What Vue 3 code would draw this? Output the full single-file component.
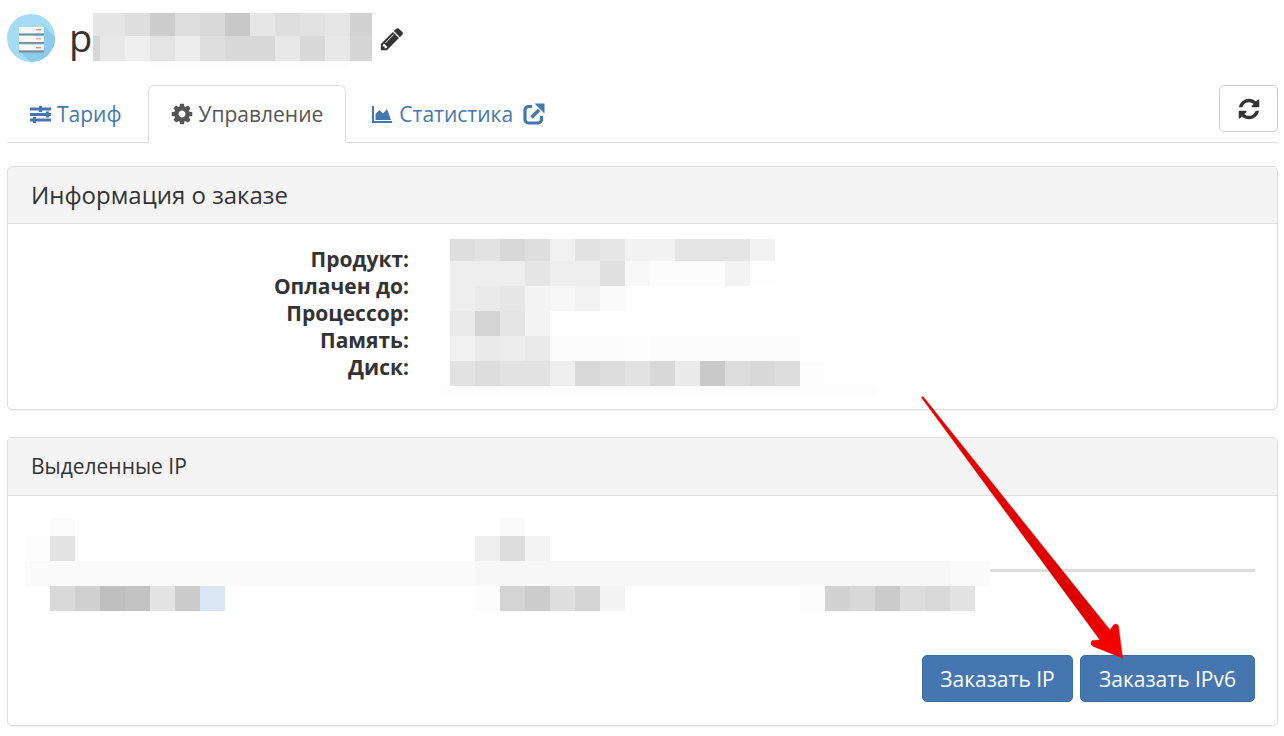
<script setup>
const seg = (colors) => colors.map((c) => [25, c])

const titleRows = [
  { h: 23, cells: [[32, '#e5e5e5'], ...seg(['#dfdfdf', '#cdcdcd', '#dedede', '#d9d9d9', '#c8c8c8', '#e6e6e6', '#dedede', '#e2e2e2', '#e6e6e6']), [22, '#d2d2d2']] },
  { h: 25, cells: [[7, '#d6d6d6'], ...seg(['#e8e8e8', '#efefef', '#e4e4e4', '#ededed', '#dedede', '#d8d8d8', '#d8d8d8', '#e8e8e8', '#d8d8d8', '#e8e8e8']), [22, '#d5d5d5']] },
  { h: 7, cells: [[57, null], [200, '#fdfdfd']] },
]

const productRows = [
  { h: 22, cells: seg(['#dedede', '#e2e2e2', '#d8d8d8', '#dedede', '#f1f1f1', '#e2e2e2', '#e6e6e6', '#f2f2f2', '#f2f2f2', '#e5e5e5', '#e5e5e5', '#e5e5e5', '#f2f2f2']) },
  { h: 25, cells: seg(['#eeeeee', '#eeeeee', '#eeeeee', '#e5e5e5', '#eeeeee', '#eeeeee', '#e0e0e0', '#f8f8f8', '#fcfcfc', '#fcfcfc', '#fcfcfc', '#f3f3f3', '#fefefe']) },
  { h: 25, cells: seg(['#eeeeee', '#eaeaea', '#e6e6e6', '#f4f4f4', '#f7f7f7', '#f3f3f3', '#fafafa']) },
  { h: 25, cells: seg(['#eaeaea', '#d4d4d4', '#e4e4e4', '#f4f4f4']) },
  { h: 25, cells: seg(['#f1f1f1', '#eaeaea', '#ededed', '#e9e9e9', '#fcfcfc', '#fcfcfc', '#fcfcfc', '#fdfdfd', '#fcfcfc', '#fcfcfc', '#fcfcfc', '#fcfcfc', '#fcfcfc', '#fcfcfc']) },
  { h: 25, cells: seg(['#e2e2e2', '#dddddd', '#e2e2e2', '#e2e2e2', '#eeeeee', '#d9d9d9', '#dcdcdc', '#e2e2e2', '#d8d8d8', '#eaeaea', '#c9c9c9', '#dcdcdc', '#d8d8d8', '#dcdcdc', '#fdfdfd']) },
  { h: 10, cells: [[-10, null], [437, '#fdfdfd']] },
]

const ipRows = [
  { h: 18, cells: [[25, null], [25, '#fbfbfb'], [425, null], [25, '#fafafa']] },
  { h: 25, cells: [[25, '#fdfdfd'], [25, '#e3e3e3'], [400, null], ...seg(['#efefef', '#dcdcdc', '#f4f4f4'])] },
  { h: 25, rule: true, cells: [[450, '#fafafa'], [475, '#f7f7f7'], [40, '#fafafa']] },
  { h: 25, cells: [[25, null], ...seg(['#d9d9d9', '#d0d0d0', '#bfbfbf', '#c3c3c3', '#e3e3e3', '#cbcbcb', '#dae6f1']), [250, null], ...seg(['#fcfcfc', '#d4d4d4', '#cccccc', '#dfdfdf', '#d5d5d5', '#f4f4f4']), [175, null], ...seg(['#fcfcfc', '#d2d2d2', '#d8d8d8', '#cbcbcb', '#dddddd', '#d9d9d9', '#e2e2e2'])] },
]

const labels = ['Продукт:', 'Оплачен до:', 'Процессор:', 'Память:', 'Диск:']
</script>

<template>
  <div class="page">
    <header class="head">
      <svg class="avatar" viewBox="0 0 48 48">
        <defs>
          <clipPath id="disc"><circle cx="24" cy="24" r="24" /></clipPath>
        </defs>
        <circle cx="24" cy="24" r="24" fill="#a3dcf4" />
        <path d="M37 12 L52 27 L52 52 L28 52 L11 36 Z" fill="#8ccbe9" clip-path="url(#disc)" />
        <rect x="12" y="13" width="25" height="6.500" fill="#f6f7f7" />
        <rect x="12" y="19.500" width="25" height="1.800" fill="#7d8a93" />
        <rect x="12" y="22" width="25" height="6" fill="#f6f7f7" />
        <rect x="12" y="28" width="25" height="1.800" fill="#7d8a93" />
        <rect x="12" y="30.500" width="25" height="6" fill="#f6f7f7" />
        <rect x="12" y="36.500" width="25" height="2" fill="#7d8a93" />
        <rect x="29" y="15" width="5" height="1.400" fill="#e08f7c" />
        <rect x="29" y="24" width="5" height="1.400" fill="#e0b09c" />
        <rect x="29" y="33" width="5" height="1.400" fill="#d08f8c" />
      </svg>
      <div class="title-wrap">
        <span class="title">ре</span>
        <div class="mosaic title-mosaic">
          <div v-for="(row, i) in titleRows" :key="i" class="m-row" :style="{ height: row.h + 'px' }">
            <i v-for="(c, j) in row.cells" :key="j" :style="{ width: c[0] + 'px', background: c[1] || 'transparent' }"></i>
          </div>
        </div>
      </div>
      <svg class="pencil" viewBox="0 0 1792 1792"><path fill="#333" d="M491 1536l91-91-235-235-91 91v107h128v128h107zm523-928q0-22-22-22-10 0-17 7l-542 542q-7 7-7 17 0 22 22 22 10 0 17-7l542-542q7-7 7-17zm-54-192l416 416-832 832h-416v-416zm683 96q0 53-37 90l-166 166-416-416 166-165q36-38 90-38 53 0 91 38l235 234q37 39 37 91z" /></svg>
    </header>

    <nav class="tabs">
      <a class="tab">
        <svg class="ic sliders" viewBox="0 0 21 17"><path d="M0 1.500h21v3H0zM0 7h21v3H0zM0 12.500h21v3H0zM9 0h3v6H9zM16 5.500h3v6h-3zM3 11h3v6H3z" /></svg>
        <span>Тариф</span>
      </a>
      <a class="tab active">
        <svg class="ic gear" viewBox="0 0 1792 1792"><path d="M1152 896q0-106-75-181t-181-75-181 75-75 181 75 181 181 75 181-75 75-181zm512-109v222q0 12-8 23t-20 13l-185 28q-19 54-39 91 35 50 107 138 10 12 10 25t-9 23q-27 37-99 108t-94 71q-12 0-26-9l-138-108q-44 23-91 38-16 136-29 186-7 28-36 28h-222q-14 0-24.500-8.500t-11.500-21.500l-28-184q-49-16-90-37l-141 107q-10 9-25 9-14 0-25-11-126-114-165-168-7-10-7-23 0-12 8-23 15-21 51-66.500t54-70.500q-27-50-41-99l-183-27q-13-2-21-12.500t-8-23.500v-222q0-12 8-23t19-13l186-28q14-46 39-92-40-57-107-138-10-12-10-24 0-10 9-23 26-36 98.500-107.500t94.500-71.500q13 0 26 10l138 107q44-23 91-38 16-136 29-186 7-28 36-28h222q14 0 24.500 8.500t11.500 21.500l28 184q49 16 90 37l142-107q9-9 24-9 13 0 25 10 129 119 165 170 7 8 7 22 0 12-8 23-15 21-51 66.500t-54 70.500q26 50 41 98l183 28q13 2 21 12.500t8 23.500z" /></svg>
        <span>Управление</span>
      </a>
      <a class="tab">
        <svg class="ic area" viewBox="0 0 20 17"><path d="M0 0h2v15h18v2H0zM3.500 14V8L7.500 4l3.500 3.500L15 3l4 11z" /></svg>
        <span>Статистика</span>
        <svg class="ext" viewBox="0 0 22 22">
          <path d="M9 3.500H5.500a3.500 3.500 0 0 0-3.500 3.500v9.500a3.500 3.500 0 0 0 3.500 3.500H15a3.500 3.500 0 0 0 3.500-3.500V13" fill="none" stroke="#4676b0" stroke-width="3.200" />
          <path d="M8.500 14.500L16 7" fill="none" stroke="#4676b0" stroke-width="3.600" />
          <path d="M11.500 0.500H21.500V10.500Z" fill="#4676b0" />
        </svg>
      </a>
      <button class="refresh" type="button">
        <svg viewBox="0 0 1792 1792"><path fill="#333" d="M1639 1056q0 5-1 7-64 268-268 434.500t-478 166.500q-146 0-282.500-55t-243.500-157l-129 129q-19 19-45 19t-45-19-19-45v-448q0-26 19-45t45-19h448q26 0 45 19t19 45-19 45l-137 137q71 66 161 102t187 36q134 0 250-65t186-179q11-17 53-117 8-23 30-23h192q13 0 22.500 9.500t9.500 22.500zm25-800v448q0 26-19 45t-45 19h-448q-26 0-45-19t-19-45 19-45l138-138q-148-137-349-137-134 0-250 65t-186 179q-11 17-53 117-8 23-30 23h-199q-13 0-22.500-9.500t-9.500-22.500v-7q65-268 270-434.500t480-166.500q146 0 284 55.500t245 156.500l130-129q19-19 45-19t45 19 19 45z" /></svg>
      </button>
    </nav>

    <section class="panel info">
      <h2 class="panel-head big">Информация о заказе</h2>
      <div class="info-body">
        <ul class="labels">
          <li v-for="l in labels" :key="l">{{ l }}</li>
        </ul>
        <div class="mosaic">
          <div v-for="(row, i) in productRows" :key="i" class="m-row" :style="{ height: row.h + 'px' }">
            <i v-for="(c, j) in row.cells" :key="j" :style="{ width: Math.abs(c[0]) + 'px', marginLeft: c[0] < 0 ? c[0] * 2 + 'px' : '0', background: c[1] || 'transparent' }"></i>
          </div>
        </div>
      </div>
    </section>

    <section class="panel ips">
      <h3 class="panel-head small">Выделенные IP</h3>
      <div class="ip-body">
        <div class="mosaic">
          <div v-for="(row, i) in ipRows" :key="i" class="m-row" :style="{ height: row.h + 'px' }">
            <i v-for="(c, j) in row.cells" :key="j" :style="{ width: c[0] + 'px', background: c[1] || 'transparent' }"></i>
            <span v-if="row.rule" class="rule"></span>
          </div>
        </div>
        <div class="actions">
          <button class="btn ip4" type="button">Заказать IP</button>
          <button class="btn ip6" type="button">Заказать IPv6</button>
        </div>
      </div>
    </section>

    <svg class="arrow" viewBox="0 0 1284 736">
      <defs>
        <linearGradient id="ar" x1="922" y1="397" x2="1122" y2="657" gradientUnits="userSpaceOnUse">
          <stop offset="0" stop-color="#e80000" />
          <stop offset="0.8" stop-color="#dc0000" />
          <stop offset="1" stop-color="#ff0000" />
        </linearGradient>
      </defs>
      <path d="M921.500 397.500L923 396.500L1110 630L1112.500 626.500Q1116 622 1118.500 626L1122.500 658L1093.500 646.500Q1089 643.500 1092.500 640.500L1100 640Z" fill="url(#ar)" stroke="url(#ar)" stroke-width="0.500" stroke-linejoin="round" />
    </svg>
  </div>
</template>

<style>
html, body {
  margin: 0;
  background: #fff;
}
</style>

<style scoped>
.page {
  position: relative;
  box-sizing: border-box;
  width: 1284px;
  height: 736px;
  padding: 0 6px 0 7px;
  overflow: hidden;
  font-family: "Open Sans", "Noto Sans", sans-serif;
  color: #333;
}
.head {
  display: flex;
  align-items: flex-start;
  height: 85px;
}
.avatar {
  width: 48px;
  height: 48px;
  margin-top: 14px;
  flex: none;
}
.title-wrap {
  position: relative;
  width: 311px;
  margin-left: 14px;
  padding-top: 13px;
}
.title {
  font-size: 38px;
  line-height: 48px;
}
.title-mosaic {
  position: absolute;
  left: 24px;
  top: 13px;
}
.pencil {
  width: 26px;
  height: 26px;
  margin-top: 26px;
  flex: none;
  transform: translateX(-1px);
}
.mosaic {
  display: flex;
  flex-direction: column;
}
.m-row {
  display: flex;
}
.m-row i {
  display: block;
  flex: none;
  height: 100%;
}
.tabs {
  position: relative;
  display: flex;
  align-items: flex-start;
  height: 58px;
  border-bottom: 1px solid #ddd;
  box-sizing: border-box;
  font-size: 21px;
}
.tab {
  display: flex;
  align-items: center;
  box-sizing: border-box;
  height: 58px;
  padding: 0 22px 0 21px;
  margin-right: 4px;
  color: #4676b0;
  border: 1px solid transparent;
  border-radius: 6px 6px 0 0;
}
.tab.active {
  color: #555;
  background: #fff;
  border-color: #ddd;
  border-bottom-color: #fff;
}
.ic {
  width: 24px;
  height: 24px;
  margin-right: 5px;
  fill: currentColor;
  flex: none;
}
.sliders {
  width: 21px;
  height: 17px;
  margin-left: 1px;
  margin-right: 6px;
}
.gear {
  margin-right: 4px;
}
.area {
  width: 20px;
  height: 17px;
  margin-right: 7px;
}
.ext {
  width: 22px;
  height: 22px;
  margin-left: 10px;
  flex: none;
}
.refresh {
  display: flex;
  align-items: center;
  justify-content: center;
  width: 59px;
  height: 47px;
  margin-left: auto;
  padding: 0;
  background: #fff;
  border: 1px solid #ccc;
  border-radius: 5px;
}
.refresh svg {
  width: 24px;
  height: 24px;
}
.panel {
  box-sizing: border-box;
  border: 1px solid #ddd;
  border-radius: 5px;
  box-shadow: 0 1px 1px rgba(0, 0, 0, 0.05);
}
.info {
  height: 244px;
  margin-top: 23px;
}
.ips {
  height: 289px;
  margin-top: 27px;
}
.panel-head {
  margin: 0;
  padding: 0 23px;
  background: #f4f4f4;
  border-bottom: 1px solid #ddd;
  border-radius: 4px 4px 0 0;
  font-weight: 400;
  color: #333;
}
.panel-head.big {
  height: 56px;
  font-size: 24px;
  line-height: 56px;
}
.panel-head.small {
  height: 57px;
  font-size: 21px;
  line-height: 57px;
}
.info-body {
  display: flex;
  padding-top: 15px;
}
.labels {
  width: 401px;
  margin: 7px 41px 0 0;
  padding: 0;
  list-style: none;
  text-align: right;
  font-size: 21px;
  font-weight: 700;
  line-height: 27px;
}
.ip-body {
  padding: 22px 22px 0 17px;
}
.rule {
  flex: 1;
  height: 3px;
  margin-top: 8px;
  background: #ddd;
}
.actions {
  display: flex;
  justify-content: flex-end;
  gap: 7px;
  margin-top: 44px;
}
.btn {
  height: 47px;
  padding: 0;
  background: #4676b0;
  border: 1px solid #3e6ca4;
  border-radius: 5px;
  color: #fff;
  font-family: inherit;
  font-size: 21px;
}
.ip4 {
  width: 151px;
}
.ip6 {
  width: 175px;
}
.arrow {
  position: absolute;
  left: 0;
  top: 0;
  width: 1284px;
  height: 736px;
  pointer-events: none;
}
</style>
